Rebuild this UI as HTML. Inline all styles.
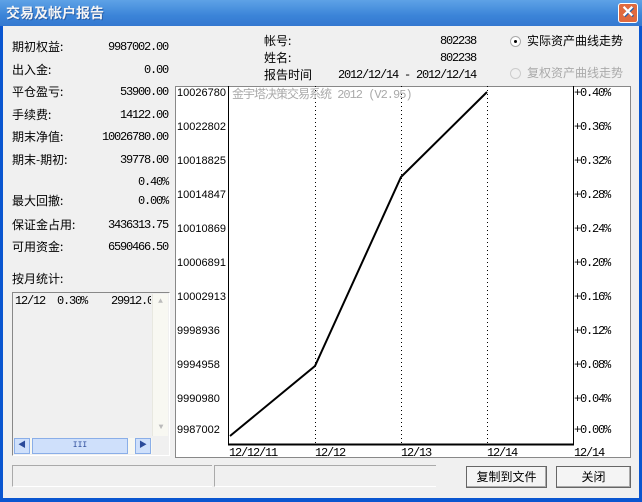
<!DOCTYPE html>
<html><head><meta charset="utf-8"><style>
*{margin:0;padding:0;box-sizing:border-box}
body{width:642px;height:502px;overflow:hidden;background:#0a56d0;font-family:"Liberation Mono","Noto Sans CJK SC",monospace;font-size:12px;color:#000;position:relative}
.title{position:absolute;left:0;top:0;width:642px;height:26px;background:linear-gradient(#5ea2e6,#3b84d8 60%,#3478d0);color:#f4f4f4;font:bold 14px "Noto Sans CJK SC",sans-serif;padding:3px 6px;text-shadow:1px 1px #2a5fa8}
.x{position:absolute;right:4px;top:3px;width:20px;height:20px;background:#e06a3e;border:1px solid #fff;border-radius:3px;color:#fff;font:bold 16px "Liberation Sans",sans-serif;text-align:center;line-height:18px}
.main{position:absolute;left:3px;top:26px;width:636px;height:472px;background:#f0f0f0}
.a{position:absolute;white-space:pre}
.m{letter-spacing:-1.2px}
.cn{font-family:"Noto Sans CJK SC",sans-serif;letter-spacing:0}
.r{text-align:right}
.chart{position:absolute;left:175px;top:86px;width:456px;height:372px;background:#fff;border:1px solid #888}
.btn{position:absolute;height:22px;border:1px solid #666;background:#f4f4f4;font-family:"Noto Sans CJK SC",sans-serif;text-align:center;line-height:20px;box-shadow:inset -1px -1px #aaa}
</style></head><body>
<div class="title">交易及帐户报告<div class="x">✕</div></div>
<div class="main"></div>
<div class="a cn" style="left:12px;top:38px">期初权益:</div><div class="a r m" style="left:60px;width:108px;top:40px">9987002.00</div>
<div class="a cn" style="left:12px;top:61px">出入金:</div><div class="a r m" style="left:60px;width:108px;top:63px">0.00</div>
<div class="a cn" style="left:12px;top:83px">平仓盈亏:</div><div class="a r m" style="left:60px;width:108px;top:85px">53900.00</div>
<div class="a cn" style="left:12px;top:106px">手续费:</div><div class="a r m" style="left:60px;width:108px;top:108px">14122.00</div>
<div class="a cn" style="left:12px;top:128px">期末净值:</div><div class="a r m" style="left:60px;width:108px;top:130px">10026780.00</div>
<div class="a cn" style="left:12px;top:151px">期末-期初:</div><div class="a r m" style="left:60px;width:108px;top:153px">39778.00</div>
<div class="a r m" style="left:60px;width:108px;top:175px">0.40%</div>
<div class="a cn" style="left:12px;top:192px">最大回撤:</div><div class="a r m" style="left:60px;width:108px;top:194px">0.00%</div>
<div class="a cn" style="left:12px;top:216px">保证金占用:</div><div class="a r m" style="left:60px;width:108px;top:218px">3436313.75</div>
<div class="a cn" style="left:12px;top:238px">可用资金:</div><div class="a r m" style="left:60px;width:108px;top:240px">6590466.50</div>
<div class="a cn" style="left:12px;top:270px">按月统计:</div>
<div class="a" style="left:12px;top:292px;width:158px;height:164px;border:1px solid #888;border-right-color:#fff;border-bottom-color:#fff;background:#f0f0f0"></div>
<div class="a m" style="left:15px;top:294px;width:136px;overflow:hidden">12/12  0.30%    29912.00</div>
<div class="a" style="left:152px;top:294px;width:16px;height:142px;background:#f8f8f2;border-left:1px solid #e8e8e0;color:#bbb;font-size:8px;text-align:center;line-height:16px">▲<div style="position:absolute;bottom:0;width:16px">▼</div></div>
<div class="a" style="left:14px;top:438px;width:138px;height:16px;background:#f8f8f2"></div>
<div class="a" style="left:14px;top:438px;width:16px;height:16px;background:#cfe0fb;border:1px solid #8aaee8;font-size:8px;color:#2a4a9a;text-align:center;line-height:14px">◀</div>
<div class="a" style="left:32px;top:438px;width:96px;height:16px;background:#cfe0fb;border:1px solid #8aaee8;font-size:8px;color:#2a4a9a;text-align:center;line-height:14px">III</div>
<div class="a" style="left:135px;top:438px;width:16px;height:16px;background:#cfe0fb;border:1px solid #8aaee8;font-size:8px;color:#2a4a9a;text-align:center;line-height:14px">▶</div>
<div class="a cn" style="left:264px;top:32px">帐号:</div><div class="a r m" style="left:380px;width:96px;top:34px">802238</div>
<div class="a cn" style="left:264px;top:49px">姓名:</div><div class="a r m" style="left:380px;width:96px;top:51px">802238</div>
<div class="a cn" style="left:264px;top:66px">报告时间</div><div class="a m" style="left:338px;top:68px">2012/12/14 - 2012/12/14</div>
<div class="a" style="left:510px;top:36px;width:11px;height:11px;border:1px solid #aaa;border-radius:50%;background:#fff"><div style="position:absolute;left:3px;top:3px;width:3px;height:3px;background:#000;border-radius:50%"></div></div>
<div class="a cn" style="left:527px;top:32px">实际资产曲线走势</div>
<div class="a" style="left:510px;top:68px;width:11px;height:11px;border:1px solid #ccc;border-radius:50%"></div>
<div class="a cn" style="left:527px;top:64px;color:#aaa">复权资产曲线走势</div>
<div class="chart"></div>
<svg class="a" style="left:175px;top:86px" width="456" height="372">
<g stroke="#000" stroke-dasharray="1 3" stroke-width="1">
<line x1="140.5" y1="0" x2="140.5" y2="358"/><line x1="226.5" y1="0" x2="226.5" y2="358"/><line x1="312.5" y1="0" x2="312.5" y2="358"/>
</g>
<line x1="53.5" y1="0" x2="53.5" y2="358" stroke="#000"/>
<line x1="398.5" y1="0" x2="398.5" y2="358" stroke="#000"/>
<line x1="53" y1="358.5" x2="399" y2="358.5" stroke="#000" stroke-width="2"/>
<polyline points="55,350 140,280 226,91 312,6" fill="none" stroke="#000" stroke-width="2"/>
<g font-family="Liberation Sans" font-size="11" fill="#000">
<text x="2" y="10">10026780</text><text x="2" y="44">10022802</text><text x="2" y="78">10018825</text><text x="2" y="112">10014847</text><text x="2" y="146">10010869</text><text x="2" y="180">10006891</text><text x="2" y="214">10002913</text><text x="2" y="248">9998936</text><text x="2" y="282">9994958</text><text x="2" y="316">9990980</text><text x="2" y="347">9987002</text>
</g>
<g font-family="Liberation Mono" font-size="12" letter-spacing="-1.2" fill="#000">
<text x="399" y="10">+0.40%</text><text x="399" y="44">+0.36%</text><text x="399" y="78">+0.32%</text><text x="399" y="112">+0.28%</text><text x="399" y="146">+0.24%</text><text x="399" y="180">+0.20%</text><text x="399" y="214">+0.16%</text><text x="399" y="248">+0.12%</text><text x="399" y="282">+0.08%</text><text x="399" y="316">+0.04%</text><text x="399" y="347">+0.00%</text>
<text x="54" y="370">12/12/11</text><text x="140" y="370">12/12</text><text x="226" y="370">12/13</text><text x="312" y="370">12/14</text><text x="399" y="370">12/14</text>
</g>
<text x="57" y="12" font-family="Liberation Mono,Noto Sans CJK SC" font-size="12" letter-spacing="-1" fill="#aaa">金宇塔决策交易系统 2012 (V2.95)</text>
</svg>
<div class="a" style="left:12px;top:465px;width:200px;height:22px;border-top:1px solid #aaa;border-left:1px solid #aaa;border-bottom:1px solid #fff"></div>
<div class="a" style="left:214px;top:465px;width:222px;height:22px;border-top:1px solid #aaa;border-left:1px solid #aaa;border-bottom:1px solid #fff"></div>
<div class="btn" style="left:466px;top:466px;width:81px">复制到文件</div>
<div class="btn" style="left:556px;top:466px;width:75px">关闭</div>
</body></html>
